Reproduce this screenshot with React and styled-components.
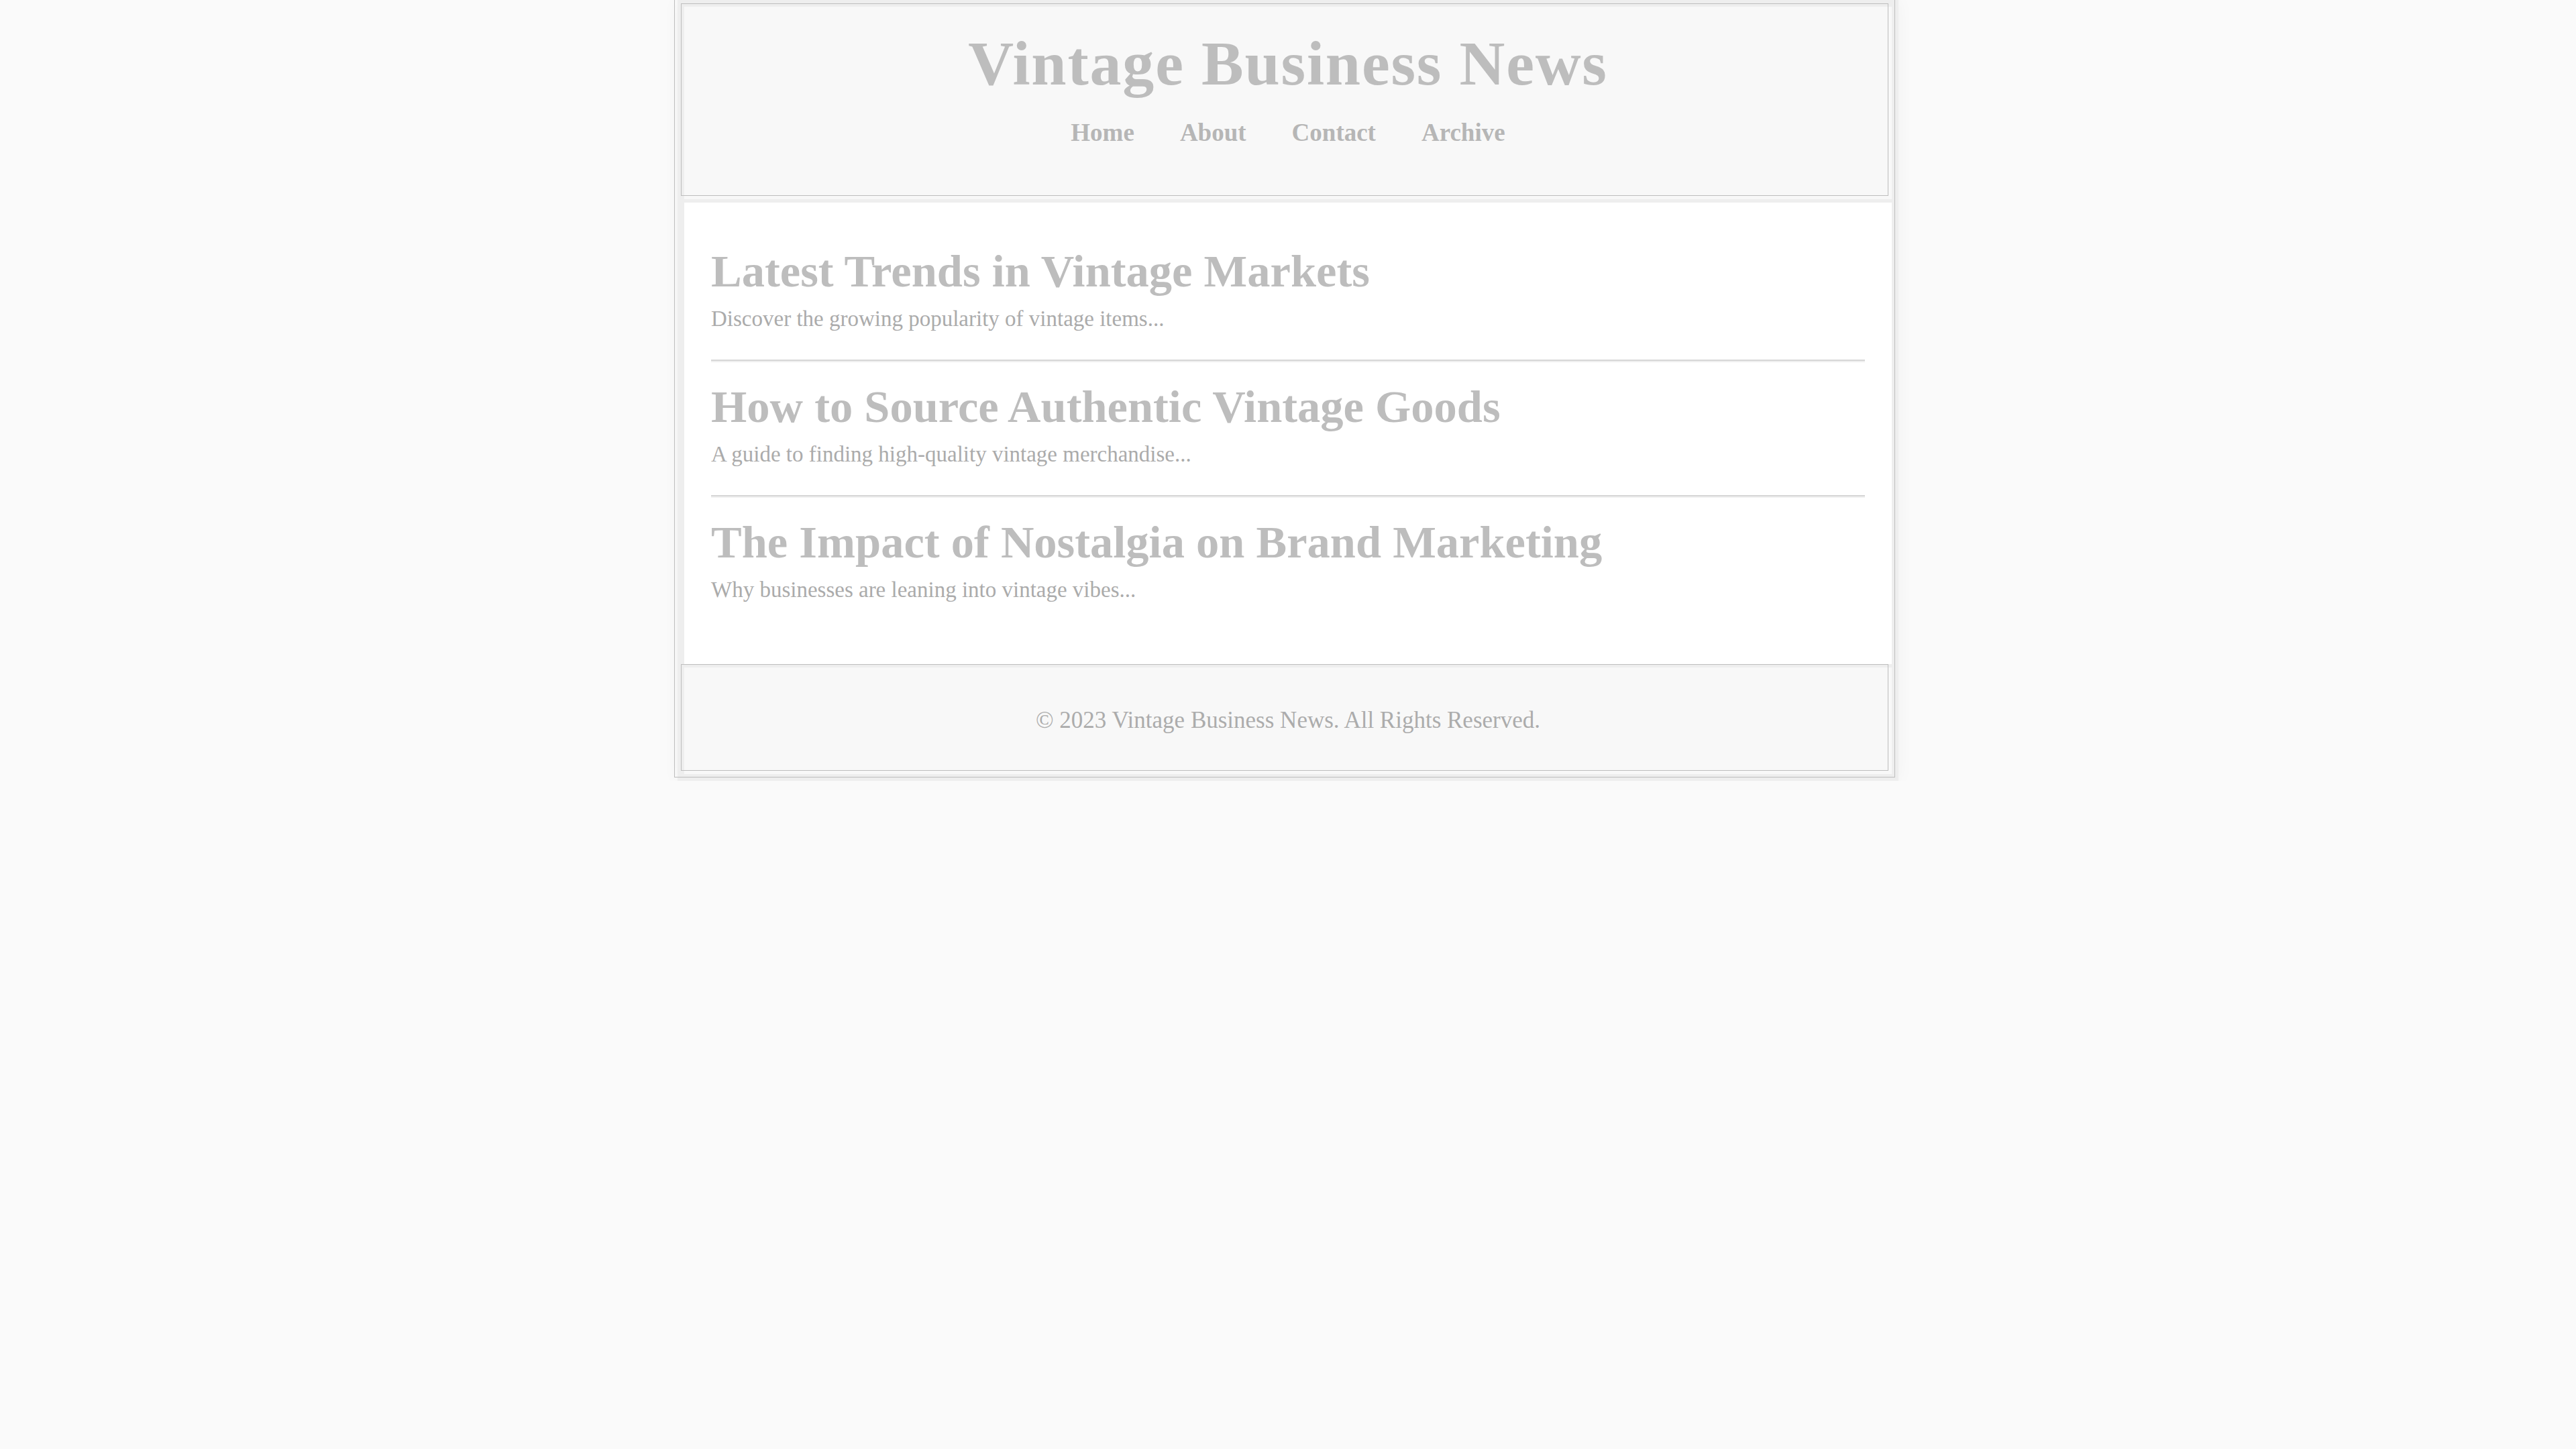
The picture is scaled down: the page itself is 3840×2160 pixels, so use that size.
import React from "react";
import styled, { createGlobalStyle, css } from "styled-components";

const GlobalStyle = createGlobalStyle`
  html, body {
    margin: 0;
    padding: 0;
    background: #fafafa;
  }
  body {
    font-family: Georgia, "Liberation Serif", "Times New Roman", serif;
    color: #b5b5b5;
  }
`;

// each framed panel draws its rule 5px up and to the left of its fill
const offsetFrame = css`
  position: relative;

  &::before {
    content: "";
    position: absolute;
    inset: 0;
    transform: translate(-5px, -5px);
    border: 1px solid #bdbdbd;
    pointer-events: none;
  }
`;

const Page = styled.div`
  ${offsetFrame}
  box-sizing: border-box;
  width: 1820px;
  margin: 0 auto;
  padding: 10px;
  background: #eeeeee;
  box-shadow: 0 0 24px rgba(0, 0, 0, 0.04);
  display: flex;
  flex-direction: column;
  gap: 5px;
`;

const Header = styled.header`
  ${offsetFrame}
  height: 287px;
  box-sizing: border-box;
  padding-top: 44px;
  background: #f8f8f8;
  text-align: center;
`;

const SiteTitle = styled.h1`
  margin: 0;
  font-size: 94px;
  font-weight: 700;
  line-height: 80px;
  letter-spacing: 1.8px;
  color: #bdbdbd;
`;

const Nav = styled.nav`
  display: flex;
  justify-content: center;
  gap: 68px;
  margin-top: 44px;
`;

const NavLink = styled.a`
  font-size: 37px;
  font-weight: 700;
  line-height: 40px;
  color: #b6b6b6;
  text-decoration: none;
`;

const Main = styled.main`
  background: #ffffff;
  padding: 34px 40px 50px;
`;

const Article = styled.article`
  padding: 36px 0 44px;
  border-bottom: ${({ last }) => (last ? "none" : "2px solid #d6d6d6")};
  box-shadow: ${({ last }) => (last ? "none" : "0 2px 0 #f0f0f0")};
`;

const ArticleTitle = styled.h2`
  margin: 0 0 22px;
  font-size: 68.5px;
  font-weight: 700;
  line-height: 65px;
  color: #bdbdbd;
`;

const Excerpt = styled.p`
  margin: 0;
  font-size: 33px;
  line-height: 33px;
  color: #ababab;
`;

const Footer = styled.footer`
  ${offsetFrame}
  height: 159px;
  box-sizing: border-box;
  padding-top: 62px;
  background: #f8f8f8;
  text-align: center;
  font-size: 35px;
  line-height: 33px;
  color: #acacac;
`;

const articles = [
  {
    title: "Latest Trends in Vintage Markets",
    excerpt: "Discover the growing popularity of vintage items...",
  },
  {
    title: "How to Source Authentic Vintage Goods",
    excerpt: "A guide to finding high-quality vintage merchandise...",
  },
  {
    title: "The Impact of Nostalgia on Brand Marketing",
    excerpt: "Why businesses are leaning into vintage vibes...",
  },
];

const App = () => {
  return (
    <>
      <GlobalStyle />
      <Page>
        <Header>
          <SiteTitle>Vintage Business News</SiteTitle>
          <Nav>
            <NavLink href="#">Home</NavLink>
            <NavLink href="#">About</NavLink>
            <NavLink href="#">Contact</NavLink>
            <NavLink href="#">Archive</NavLink>
          </Nav>
        </Header>
        <Main>
          {articles.map((article, i) => (
            <Article key={article.title} last={i === articles.length - 1}>
              <ArticleTitle>{article.title}</ArticleTitle>
              <Excerpt>{article.excerpt}</Excerpt>
            </Article>
          ))}
        </Main>
        <Footer>© 2023 Vintage Business News. All Rights Reserved.</Footer>
      </Page>
    </>
  );
};

export default App;
